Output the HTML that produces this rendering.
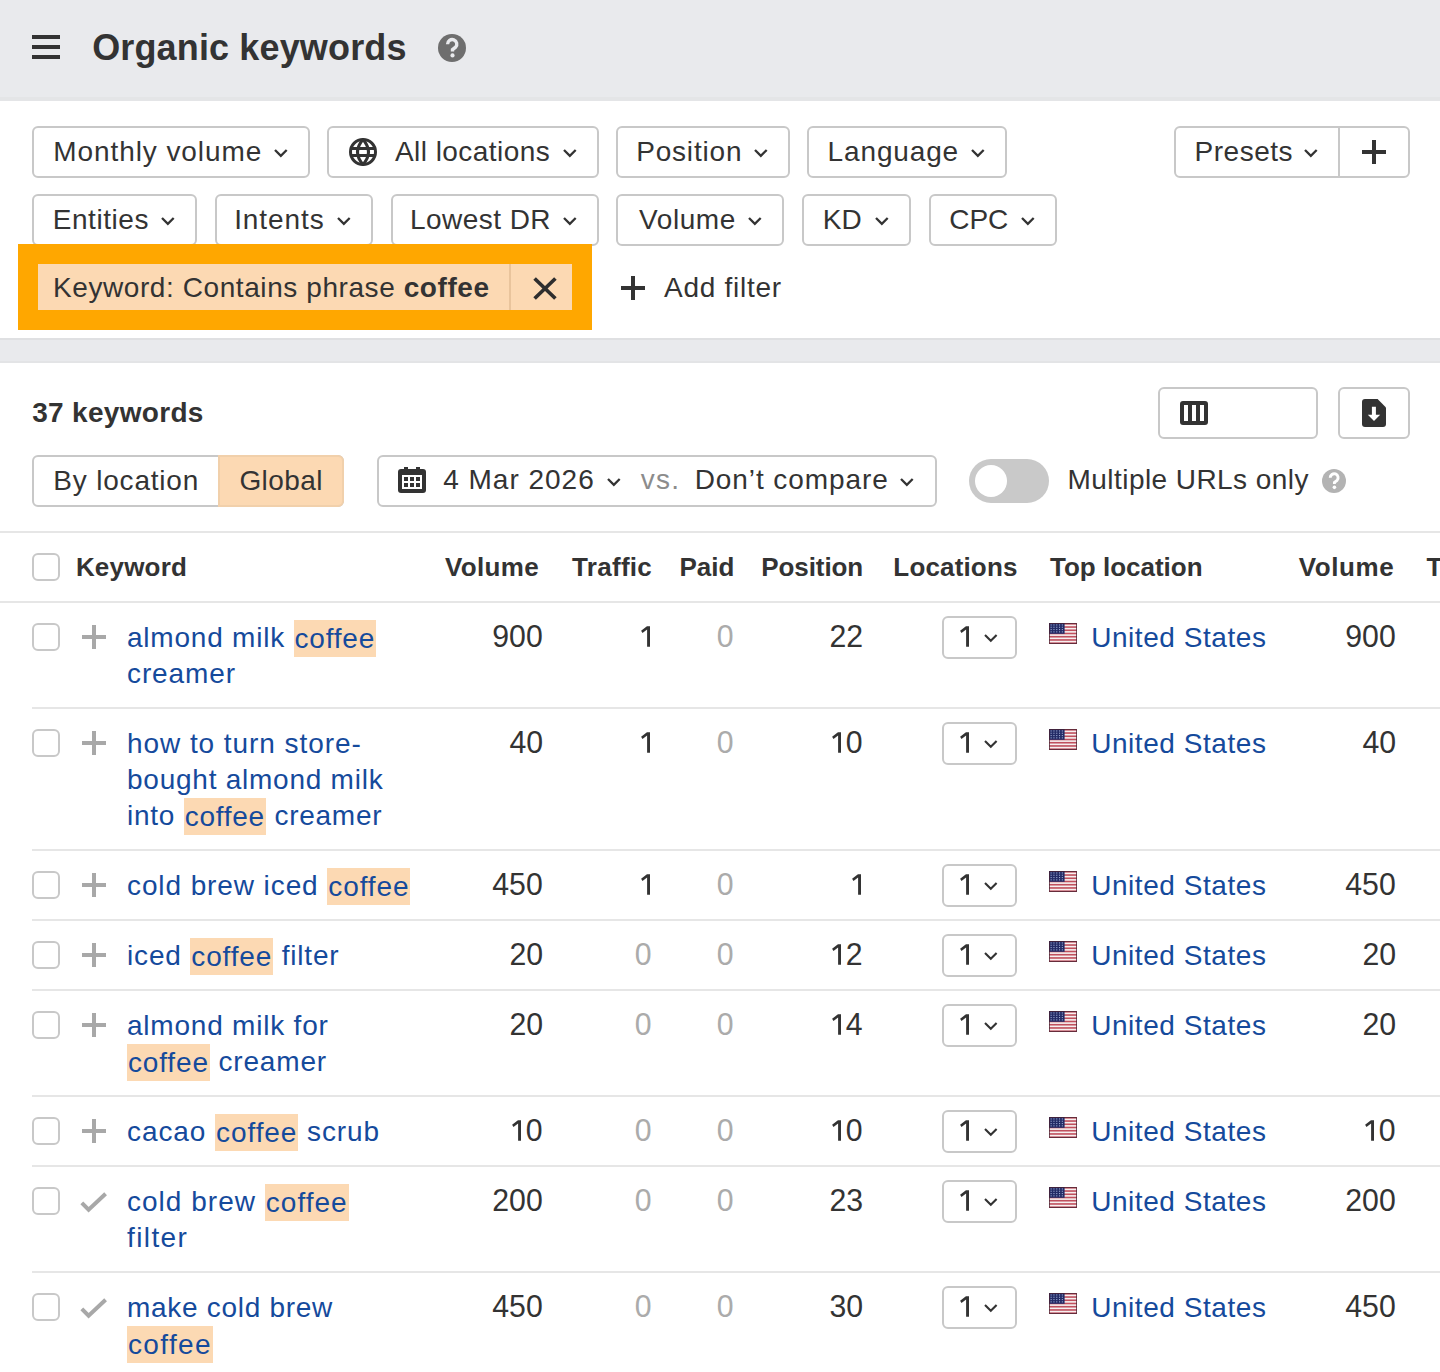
<!DOCTYPE html>
<html><head><meta charset="utf-8"><title>Organic keywords</title>
<style>
html,body{margin:0;padding:0;}
body{width:1440px;height:1372px;overflow:hidden;position:relative;background:#fff;font-family:"Liberation Sans",sans-serif;}
.t{position:absolute;white-space:nowrap;line-height:1;}
.b{position:absolute;}
.kw{font-size:28px;color:#154a9c;letter-spacing:0.55px;line-height:1;}
.hl{background:#fcd9b3;padding:2.5px 1px 4px 1px;}
</style></head><body>
<div class="b" style="left:0px;top:0px;width:1440px;height:97px;background:#e9eaed"></div>
<div class="b" style="left:0px;top:97px;width:1440px;height:4px;background:#e4e5e7"></div>
<div class="b" style="left:32px;top:35px;width:28px;height:4px;background:#333333"></div>
<div class="b" style="left:32px;top:45px;width:28px;height:4px;background:#333333"></div>
<div class="b" style="left:32px;top:55px;width:28px;height:4px;background:#333333"></div>
<span class="t" style="left:92.15px;top:30.33px;font-size:36px;font-weight:700;color:#333333;letter-spacing:0.147px;">Organic keywords</span>
<svg class="b" style="left:438px;top:34px" width="28" height="28" viewBox="0 0 28 28"><circle cx="14" cy="14" r="14" fill="#6e6e6e"/><path d="M9.6 10.2A4.6 4.6 0 1 1 17.6 13.2L14.5 15.6V17.6" fill="none" stroke="#e9eaed" stroke-width="3.4"/><circle cx="14.5" cy="21.4" r="2.1" fill="#e9eaed"/></svg>
<div class="b" style="left:32px;top:126px;width:278px;height:52px;border:2px solid #c8c8c8;border-radius:6px;box-sizing:border-box;background:#fff"></div>
<span class="t" style="left:53.18px;top:138.30px;font-size:28px;color:#333333;letter-spacing:0.929px;">Monthly volume</span>
<svg class="b" style="left:272.20px;top:146.60px" width="17.70" height="11.90" viewBox="-3 -3 17.70 11.90"><polyline points="0,0 5.85,5.90 11.70,0" fill="none" stroke="#333333" stroke-width="2.3" stroke-linecap="butt" stroke-linejoin="miter"/></svg>
<div class="b" style="left:327px;top:126px;width:272px;height:52px;border:2px solid #c8c8c8;border-radius:6px;box-sizing:border-box;background:#fff"></div>
<span class="t" style="left:395.00px;top:138.30px;font-size:28px;color:#333333;letter-spacing:0.442px;">All locations</span>
<svg class="b" style="left:561.20px;top:146.60px" width="17.70" height="11.90" viewBox="-3 -3 17.70 11.90"><polyline points="0,0 5.85,5.90 11.70,0" fill="none" stroke="#333333" stroke-width="2.3" stroke-linecap="butt" stroke-linejoin="miter"/></svg>
<svg class="b" style="left:349px;top:138px" width="28" height="28" viewBox="0 0 28 28"><g fill="none" stroke="#333" stroke-width="3"><circle cx="14" cy="14" r="12.5"/><path d="M14 1.5Q25 14 14 26.5Q3 14 14 1.5Z"/><path d="M2 10.5H26M2 17.5H26"/></g></svg>
<div class="b" style="left:616px;top:126px;width:174px;height:52px;border:2px solid #c8c8c8;border-radius:6px;box-sizing:border-box;background:#fff"></div>
<span class="t" style="left:636.14px;top:138.30px;font-size:28px;color:#333333;letter-spacing:0.829px;">Position</span>
<svg class="b" style="left:752.20px;top:146.60px" width="17.70" height="11.90" viewBox="-3 -3 17.70 11.90"><polyline points="0,0 5.85,5.90 11.70,0" fill="none" stroke="#333333" stroke-width="2.3" stroke-linecap="butt" stroke-linejoin="miter"/></svg>
<div class="b" style="left:807px;top:126px;width:200px;height:52px;border:2px solid #c8c8c8;border-radius:6px;box-sizing:border-box;background:#fff"></div>
<span class="t" style="left:827.60px;top:138.30px;font-size:28px;color:#333333;letter-spacing:0.857px;">Language</span>
<svg class="b" style="left:969.20px;top:146.60px" width="17.70" height="11.90" viewBox="-3 -3 17.70 11.90"><polyline points="0,0 5.85,5.90 11.70,0" fill="none" stroke="#333333" stroke-width="2.3" stroke-linecap="butt" stroke-linejoin="miter"/></svg>
<div class="b" style="left:1174px;top:126px;width:236px;height:52px;border:2px solid #c8c8c8;border-radius:6px;box-sizing:border-box;background:#fff"></div>
<div class="b" style="left:1338px;top:128px;width:2px;height:48px;background:#c8c8c8"></div>
<span class="t" style="left:1194.52px;top:138.30px;font-size:28px;color:#333333;letter-spacing:0.520px;">Presets</span>
<svg class="b" style="left:1301.50px;top:146.60px" width="17.70" height="11.90" viewBox="-3 -3 17.70 11.90"><polyline points="0,0 5.85,5.90 11.70,0" fill="none" stroke="#333333" stroke-width="2.3" stroke-linecap="butt" stroke-linejoin="miter"/></svg>
<svg class="b" style="left:1362px;top:140px" width="24" height="24" viewBox="0 0 24 24"><path d="M12.0 0V24M0 12.0H24" stroke="#333333" stroke-width="4"/></svg>
<div class="b" style="left:32px;top:194px;width:165px;height:52px;border:2px solid #c8c8c8;border-radius:6px;box-sizing:border-box;background:#fff"></div>
<span class="t" style="left:52.68px;top:206.30px;font-size:28px;color:#333333;letter-spacing:0.560px;">Entities</span>
<svg class="b" style="left:159.20px;top:214.60px" width="17.70" height="11.90" viewBox="-3 -3 17.70 11.90"><polyline points="0,0 5.85,5.90 11.70,0" fill="none" stroke="#333333" stroke-width="2.3" stroke-linecap="butt" stroke-linejoin="miter"/></svg>
<div class="b" style="left:215px;top:194px;width:158px;height:52px;border:2px solid #c8c8c8;border-radius:6px;box-sizing:border-box;background:#fff"></div>
<span class="t" style="left:234.14px;top:206.30px;font-size:28px;color:#333333;letter-spacing:0.943px;">Intents</span>
<svg class="b" style="left:335.20px;top:214.60px" width="17.70" height="11.90" viewBox="-3 -3 17.70 11.90"><polyline points="0,0 5.85,5.90 11.70,0" fill="none" stroke="#333333" stroke-width="2.3" stroke-linecap="butt" stroke-linejoin="miter"/></svg>
<div class="b" style="left:390.8px;top:194px;width:208.2px;height:52px;border:2px solid #c8c8c8;border-radius:6px;box-sizing:border-box;background:#fff"></div>
<span class="t" style="left:410.10px;top:206.30px;font-size:28px;color:#333333;letter-spacing:0.438px;">Lowest DR</span>
<svg class="b" style="left:561.20px;top:214.60px" width="17.70" height="11.90" viewBox="-3 -3 17.70 11.90"><polyline points="0,0 5.85,5.90 11.70,0" fill="none" stroke="#333333" stroke-width="2.3" stroke-linecap="butt" stroke-linejoin="miter"/></svg>
<div class="b" style="left:616px;top:194px;width:168px;height:52px;border:2px solid #c8c8c8;border-radius:6px;box-sizing:border-box;background:#fff"></div>
<span class="t" style="left:639.08px;top:206.30px;font-size:28px;color:#333333;letter-spacing:0.560px;">Volume</span>
<svg class="b" style="left:746.20px;top:214.60px" width="17.70" height="11.90" viewBox="-3 -3 17.70 11.90"><polyline points="0,0 5.85,5.90 11.70,0" fill="none" stroke="#333333" stroke-width="2.3" stroke-linecap="butt" stroke-linejoin="miter"/></svg>
<div class="b" style="left:802px;top:194px;width:109px;height:52px;border:2px solid #c8c8c8;border-radius:6px;box-sizing:border-box;background:#fff"></div>
<span class="t" style="left:822.80px;top:206.30px;font-size:28px;color:#333333;letter-spacing:0.000px;">KD</span>
<svg class="b" style="left:873.20px;top:214.60px" width="17.70" height="11.90" viewBox="-3 -3 17.70 11.90"><polyline points="0,0 5.85,5.90 11.70,0" fill="none" stroke="#333333" stroke-width="2.3" stroke-linecap="butt" stroke-linejoin="miter"/></svg>
<div class="b" style="left:929px;top:194px;width:128px;height:52px;border:2px solid #c8c8c8;border-radius:6px;box-sizing:border-box;background:#fff"></div>
<span class="t" style="left:949.36px;top:206.30px;font-size:28px;color:#333333;letter-spacing:-0.130px;">CPC</span>
<svg class="b" style="left:1019.20px;top:214.60px" width="17.70" height="11.90" viewBox="-3 -3 17.70 11.90"><polyline points="0,0 5.85,5.90 11.70,0" fill="none" stroke="#333333" stroke-width="2.3" stroke-linecap="butt" stroke-linejoin="miter"/></svg>
<div class="b" style="left:18px;top:244px;width:574px;height:86px;background:#ffa700"></div>
<div class="b" style="left:38px;top:264px;width:534px;height:46px;background:#fcd9b3"></div>
<div class="b" style="left:509px;top:264px;width:2px;height:46px;background:#e9c49c"></div>
<span class="t" style="left:53px;top:274.3px;font-size:28px;color:#333;letter-spacing:0.58px">Keyword: Contains phrase <b>coffee</b></span>
<svg class="b" style="left:533px;top:276.5px" width="24" height="23" viewBox="0 0 24 23"><path d="M1.6 1.5L22.4 21.5M22.4 1.5L1.6 21.5" stroke="#2e2e2e" stroke-width="3.7"/></svg>
<svg class="b" style="left:621px;top:276px" width="24" height="24" viewBox="0 0 24 24"><path d="M12.0 0V24M0 12.0H24" stroke="#333333" stroke-width="4"/></svg>
<span class="t" style="left:664.00px;top:274.30px;font-size:28px;color:#333333;letter-spacing:0.742px;">Add filter</span>
<div class="b" style="left:0px;top:338px;width:1440px;height:25px;background:#e9eaed;border-top:2px solid #dfe0e2;border-bottom:2px solid #e3e4e6;box-sizing:border-box"></div>
<span class="t" style="left:32.20px;top:399.30px;font-size:28px;font-weight:700;color:#333333;letter-spacing:0.310px;">37 keywords</span>
<div class="b" style="left:1158px;top:387px;width:160px;height:52px;border:2px solid #c8c8c8;border-radius:6px;box-sizing:border-box"></div>
<svg class="b" style="left:1180px;top:401px" width="28" height="24" viewBox="0 0 28 24"><rect x="0" y="0" width="28" height="24" rx="3" fill="#333"/><rect x="4" y="4" width="4" height="16" fill="#fff"/><rect x="12" y="4" width="4" height="16" fill="#fff"/><rect x="20" y="4" width="4" height="16" fill="#fff"/></svg>
<div class="b" style="left:1338px;top:387px;width:72px;height:52px;border:2px solid #c8c8c8;border-radius:6px;box-sizing:border-box"></div>
<svg class="b" style="left:1362px;top:399px" width="24" height="28" viewBox="0 0 24 28"><path d="M3 0H15.6L24 8.4V25A3 3 0 0 1 21 28H3A3 3 0 0 1 0 25V3A3 3 0 0 1 3 0Z" fill="#333"/><path d="M9.9 7.7H13.9V15.7H18.2L12 22L5.8 15.7H9.9Z" fill="#fff"/></svg>
<div class="b" style="left:32px;top:455px;width:312px;height:52px;border:2px solid #c8c8c8;border-radius:6px;box-sizing:border-box;background:#fff"></div>
<div class="b" style="left:218px;top:455px;width:126px;height:52px;background:#fcd9b3;border:2px solid #f1d0ab;border-left-color:#f1d0ab;border-radius:0 6px 6px 0;box-sizing:border-box"></div>
<span class="t" style="left:53.35px;top:467.30px;font-size:28px;color:#333333;letter-spacing:0.800px;">By location</span>
<span class="t" style="left:239.40px;top:467.30px;font-size:28px;color:#333333;letter-spacing:0.440px;">Global</span>
<div class="b" style="left:377px;top:455px;width:560px;height:52px;border:2px solid #c8c8c8;border-radius:6px;box-sizing:border-box"></div>
<svg class="b" style="left:398px;top:467px" width="28" height="26" viewBox="0 0 28 26"><rect x="6" y="0" width="4" height="4" fill="#333"/><rect x="18" y="0" width="4" height="4" fill="#333"/><rect x="0" y="2" width="28" height="24" rx="3" fill="#333"/><rect x="4" y="8" width="20" height="14" fill="#fff"/><rect x="6" y="10" width="4" height="4" fill="#333"/><rect x="12" y="10" width="4" height="4" fill="#333"/><rect x="18" y="10" width="4" height="4" fill="#333"/><rect x="6" y="16" width="4" height="4" fill="#333"/><rect x="12" y="16" width="4" height="4" fill="#333"/><rect x="18" y="16" width="4" height="4" fill="#333"/></svg>
<span class="t" style="left:443.20px;top:466.30px;font-size:28px;color:#333333;letter-spacing:0.989px;">4 Mar 2026</span>
<svg class="b" style="left:604.60px;top:475.80px" width="17.70" height="11.90" viewBox="-3 -3 17.70 11.90"><polyline points="0,0 5.85,5.90 11.70,0" fill="none" stroke="#333333" stroke-width="2.3" stroke-linecap="butt" stroke-linejoin="miter"/></svg>
<span class="t" style="left:640.66px;top:466.30px;font-size:28px;color:#8c8c8c;letter-spacing:1.330px;">vs.</span>
<span class="t" style="left:694.64px;top:466.30px;font-size:28px;color:#333333;letter-spacing:0.917px;">Don’t compare</span>
<svg class="b" style="left:898.30px;top:475.80px" width="17.70" height="11.90" viewBox="-3 -3 17.70 11.90"><polyline points="0,0 5.85,5.90 11.70,0" fill="none" stroke="#333333" stroke-width="2.3" stroke-linecap="butt" stroke-linejoin="miter"/></svg>
<div class="b" style="left:969px;top:459px;width:80px;height:44px;background:#c9c9c9;border-radius:22px"></div>
<div class="b" style="left:975px;top:465px;width:32px;height:32px;background:#fff;border-radius:50%"></div>
<span class="t" style="left:1067.60px;top:466.30px;font-size:28px;color:#333333;letter-spacing:0.435px;">Multiple URLs only</span>
<svg class="b" style="left:1322px;top:469px" width="24" height="24" viewBox="0 0 28 28"><circle cx="14" cy="14" r="14" fill="#b3b3b3"/><path d="M9.6 10.2A4.6 4.6 0 1 1 17.6 13.2L14.5 15.6V17.6" fill="none" stroke="#fff" stroke-width="3.4"/><circle cx="14.5" cy="21.4" r="2.1" fill="#fff"/></svg>
<div class="b" style="left:0px;top:531px;width:1440px;height:2px;background:#e6e6e6"></div>
<div class="b" style="left:0px;top:601px;width:1440px;height:2px;background:#e6e6e6"></div>
<div class="b" style="left:32px;top:553px;width:28px;height:28px;border:2px solid #c8c8c8;border-radius:6px;box-sizing:border-box"></div>
<span class="t" style="left:75.90px;top:553.99px;font-size:26px;font-weight:700;color:#333333;letter-spacing:0.200px;">Keyword</span>
<span class="t" style="left:445.12px;top:553.99px;font-size:26px;font-weight:700;color:#333333;letter-spacing:0.328px;">Volume</span>
<span class="t" style="left:572.04px;top:553.99px;font-size:26px;font-weight:700;color:#333333;letter-spacing:0.293px;">Traffic</span>
<span class="t" style="left:679.40px;top:553.99px;font-size:26px;font-weight:700;color:#333333;letter-spacing:0.067px;">Paid</span>
<span class="t" style="left:761.36px;top:553.99px;font-size:26px;font-weight:700;color:#333333;letter-spacing:-0.109px;">Position</span>
<span class="t" style="left:893.36px;top:553.99px;font-size:26px;font-weight:700;color:#333333;letter-spacing:0.155px;">Locations</span>
<span class="t" style="left:1050.00px;top:553.99px;font-size:26px;font-weight:700;color:#333333;letter-spacing:-0.002px;">Top location</span>
<span class="t" style="left:1298.66px;top:553.99px;font-size:26px;font-weight:700;color:#333333;letter-spacing:0.612px;">Volume</span>
<span class="t" style="left:1426.50px;top:553.99px;font-size:26px;font-weight:700;color:#333333;letter-spacing:0.000px;">T</span>
<div class="b" style="left:32px;top:623px;width:28px;height:28px;border:2px solid #c8c8c8;border-radius:6px;box-sizing:border-box"></div>
<svg class="b" style="left:82px;top:625px" width="24" height="24" viewBox="0 0 24 24"><path d="M12.0 0V24M0 12.0H24" stroke="#a8a8a8" stroke-width="4"/></svg>
<span class="t kw" style="left:127px;top:624.30px;letter-spacing:0.785px">almond milk <span class="hl">coffee</span></span>
<span class="t kw" style="left:127px;top:660.30px;letter-spacing:0.883px">creamer</span>
<span class="t" style="right:897.77px;top:624.30px;font-size:28px;color:#333333;transform:scale(1.08,1.09);transform-origin:100% 23.7px">900</span>
<svg class="b" style="left:641.20px;top:626.10px" width="9" height="21" viewBox="0 0 9 21"><path d="M6.1 0.2H9V20.7H6.1V3.6L1.5 6.9L0.1 4.8L5.6 0.6Z" fill="#333333"/></svg>
<span class="t" style="right:706.92px;top:624.30px;font-size:28px;color:#ababab;transform:scale(1.08,1.09);transform-origin:100% 23.7px">0</span>
<span class="t" style="right:577.34px;top:624.30px;font-size:28px;color:#333333;transform:scale(1.08,1.09);transform-origin:100% 23.7px">22</span>
<div class="b" style="left:942px;top:616px;width:75px;height:43px;border:2px solid #c8c8c8;border-radius:6px;box-sizing:border-box"></div>
<svg class="b" style="left:959.60px;top:626.30px" width="9" height="21" viewBox="0 0 9 21"><path d="M6.1 0.2H9V20.7H6.1V3.6L1.5 6.9L0.1 4.8L5.6 0.6Z" fill="#333333"/></svg>
<svg class="b" style="left:982.30px;top:631.60px" width="17.60" height="11.80" viewBox="-3 -3 17.60 11.80"><polyline points="0,0 5.80,5.80 11.60,0" fill="none" stroke="#333333" stroke-width="2.1" stroke-linecap="butt" stroke-linejoin="miter"/></svg>
<svg class="b" style="left:1049px;top:623px" width="28" height="21" viewBox="0 0 28 21"><rect width="28" height="21" fill="#f6f0f0"/><rect x="0" y="0.000" width="28" height="1.615" fill="#c0505e"/><rect x="0" y="3.231" width="28" height="1.615" fill="#c0505e"/><rect x="0" y="6.462" width="28" height="1.615" fill="#c0505e"/><rect x="0" y="9.692" width="28" height="1.615" fill="#c0505e"/><rect x="0" y="12.923" width="28" height="1.615" fill="#c0505e"/><rect x="0" y="16.154" width="28" height="1.615" fill="#c0505e"/><rect x="0" y="19.385" width="28" height="1.615" fill="#c0505e"/><rect x="0" y="0" width="15.6" height="10.8" fill="#232b66"/><rect x="1.60" y="1.40" width="1.1" height="1.1" fill="#9aa6d0"/><rect x="1.60" y="3.70" width="1.1" height="1.1" fill="#9aa6d0"/><rect x="1.60" y="6.00" width="1.1" height="1.1" fill="#9aa6d0"/><rect x="1.60" y="8.30" width="1.1" height="1.1" fill="#9aa6d0"/><rect x="4.40" y="1.40" width="1.1" height="1.1" fill="#9aa6d0"/><rect x="4.40" y="3.70" width="1.1" height="1.1" fill="#9aa6d0"/><rect x="4.40" y="6.00" width="1.1" height="1.1" fill="#9aa6d0"/><rect x="4.40" y="8.30" width="1.1" height="1.1" fill="#9aa6d0"/><rect x="7.20" y="1.40" width="1.1" height="1.1" fill="#9aa6d0"/><rect x="7.20" y="3.70" width="1.1" height="1.1" fill="#9aa6d0"/><rect x="7.20" y="6.00" width="1.1" height="1.1" fill="#9aa6d0"/><rect x="7.20" y="8.30" width="1.1" height="1.1" fill="#9aa6d0"/><rect x="10.00" y="1.40" width="1.1" height="1.1" fill="#9aa6d0"/><rect x="10.00" y="3.70" width="1.1" height="1.1" fill="#9aa6d0"/><rect x="10.00" y="6.00" width="1.1" height="1.1" fill="#9aa6d0"/><rect x="10.00" y="8.30" width="1.1" height="1.1" fill="#9aa6d0"/><rect x="12.80" y="1.40" width="1.1" height="1.1" fill="#9aa6d0"/><rect x="12.80" y="3.70" width="1.1" height="1.1" fill="#9aa6d0"/><rect x="12.80" y="6.00" width="1.1" height="1.1" fill="#9aa6d0"/><rect x="12.80" y="8.30" width="1.1" height="1.1" fill="#9aa6d0"/><rect x="0.5" y="0.5" width="27" height="20" fill="none" stroke="#4a2030" stroke-opacity="0.75" stroke-width="1"/></svg>
<span class="t" style="left:1091.18px;top:624.30px;font-size:28px;color:#154a9c;letter-spacing:0.552px;">United States</span>
<span class="t" style="right:44.77px;top:624.30px;font-size:28px;color:#333333;transform:scale(1.08,1.09);transform-origin:100% 23.7px">900</span>
<div class="b" style="left:32px;top:707px;width:1408px;height:2px;background:#e6e6e6"></div>
<div class="b" style="left:32px;top:729px;width:28px;height:28px;border:2px solid #c8c8c8;border-radius:6px;box-sizing:border-box"></div>
<svg class="b" style="left:82px;top:731px" width="24" height="24" viewBox="0 0 24 24"><path d="M12.0 0V24M0 12.0H24" stroke="#a8a8a8" stroke-width="4"/></svg>
<span class="t kw" style="left:127px;top:730.30px;letter-spacing:0.938px">how to turn store-</span>
<span class="t kw" style="left:127px;top:766.30px;letter-spacing:0.756px">bought almond milk</span>
<span class="t kw" style="left:127px;top:802.30px;letter-spacing:0.744px">into <span class="hl">coffee</span> creamer</span>
<span class="t" style="right:897.34px;top:730.30px;font-size:28px;color:#333333;transform:scale(1.08,1.09);transform-origin:100% 23.7px">40</span>
<svg class="b" style="left:641.20px;top:732.10px" width="9" height="21" viewBox="0 0 9 21"><path d="M6.1 0.2H9V20.7H6.1V3.6L1.5 6.9L0.1 4.8L5.6 0.6Z" fill="#333333"/></svg>
<span class="t" style="right:706.92px;top:730.30px;font-size:28px;color:#ababab;transform:scale(1.08,1.09);transform-origin:100% 23.7px">0</span>
<span class="t" style="right:577.92px;top:730.30px;font-size:28px;color:#333333;transform:scale(1.08,1.09);transform-origin:100% 23.7px">0</span>
<svg class="b" style="left:832.32px;top:732.10px" width="9" height="21" viewBox="0 0 9 21"><path d="M6.1 0.2H9V20.7H6.1V3.6L1.5 6.9L0.1 4.8L5.6 0.6Z" fill="#333333"/></svg>
<div class="b" style="left:942px;top:722px;width:75px;height:43px;border:2px solid #c8c8c8;border-radius:6px;box-sizing:border-box"></div>
<svg class="b" style="left:959.60px;top:732.30px" width="9" height="21" viewBox="0 0 9 21"><path d="M6.1 0.2H9V20.7H6.1V3.6L1.5 6.9L0.1 4.8L5.6 0.6Z" fill="#333333"/></svg>
<svg class="b" style="left:982.30px;top:737.60px" width="17.60" height="11.80" viewBox="-3 -3 17.60 11.80"><polyline points="0,0 5.80,5.80 11.60,0" fill="none" stroke="#333333" stroke-width="2.1" stroke-linecap="butt" stroke-linejoin="miter"/></svg>
<svg class="b" style="left:1049px;top:729px" width="28" height="21" viewBox="0 0 28 21"><rect width="28" height="21" fill="#f6f0f0"/><rect x="0" y="0.000" width="28" height="1.615" fill="#c0505e"/><rect x="0" y="3.231" width="28" height="1.615" fill="#c0505e"/><rect x="0" y="6.462" width="28" height="1.615" fill="#c0505e"/><rect x="0" y="9.692" width="28" height="1.615" fill="#c0505e"/><rect x="0" y="12.923" width="28" height="1.615" fill="#c0505e"/><rect x="0" y="16.154" width="28" height="1.615" fill="#c0505e"/><rect x="0" y="19.385" width="28" height="1.615" fill="#c0505e"/><rect x="0" y="0" width="15.6" height="10.8" fill="#232b66"/><rect x="1.60" y="1.40" width="1.1" height="1.1" fill="#9aa6d0"/><rect x="1.60" y="3.70" width="1.1" height="1.1" fill="#9aa6d0"/><rect x="1.60" y="6.00" width="1.1" height="1.1" fill="#9aa6d0"/><rect x="1.60" y="8.30" width="1.1" height="1.1" fill="#9aa6d0"/><rect x="4.40" y="1.40" width="1.1" height="1.1" fill="#9aa6d0"/><rect x="4.40" y="3.70" width="1.1" height="1.1" fill="#9aa6d0"/><rect x="4.40" y="6.00" width="1.1" height="1.1" fill="#9aa6d0"/><rect x="4.40" y="8.30" width="1.1" height="1.1" fill="#9aa6d0"/><rect x="7.20" y="1.40" width="1.1" height="1.1" fill="#9aa6d0"/><rect x="7.20" y="3.70" width="1.1" height="1.1" fill="#9aa6d0"/><rect x="7.20" y="6.00" width="1.1" height="1.1" fill="#9aa6d0"/><rect x="7.20" y="8.30" width="1.1" height="1.1" fill="#9aa6d0"/><rect x="10.00" y="1.40" width="1.1" height="1.1" fill="#9aa6d0"/><rect x="10.00" y="3.70" width="1.1" height="1.1" fill="#9aa6d0"/><rect x="10.00" y="6.00" width="1.1" height="1.1" fill="#9aa6d0"/><rect x="10.00" y="8.30" width="1.1" height="1.1" fill="#9aa6d0"/><rect x="12.80" y="1.40" width="1.1" height="1.1" fill="#9aa6d0"/><rect x="12.80" y="3.70" width="1.1" height="1.1" fill="#9aa6d0"/><rect x="12.80" y="6.00" width="1.1" height="1.1" fill="#9aa6d0"/><rect x="12.80" y="8.30" width="1.1" height="1.1" fill="#9aa6d0"/><rect x="0.5" y="0.5" width="27" height="20" fill="none" stroke="#4a2030" stroke-opacity="0.75" stroke-width="1"/></svg>
<span class="t" style="left:1091.18px;top:730.30px;font-size:28px;color:#154a9c;letter-spacing:0.552px;">United States</span>
<span class="t" style="right:44.34px;top:730.30px;font-size:28px;color:#333333;transform:scale(1.08,1.09);transform-origin:100% 23.7px">40</span>
<div class="b" style="left:32px;top:849px;width:1408px;height:2px;background:#e6e6e6"></div>
<div class="b" style="left:32px;top:871px;width:28px;height:28px;border:2px solid #c8c8c8;border-radius:6px;box-sizing:border-box"></div>
<svg class="b" style="left:82px;top:873px" width="24" height="24" viewBox="0 0 24 24"><path d="M12.0 0V24M0 12.0H24" stroke="#a8a8a8" stroke-width="4"/></svg>
<span class="t kw" style="left:127px;top:872.30px;letter-spacing:0.900px">cold brew iced <span class="hl">coffee</span></span>
<span class="t" style="right:897.77px;top:872.30px;font-size:28px;color:#333333;transform:scale(1.08,1.09);transform-origin:100% 23.7px">450</span>
<svg class="b" style="left:641.20px;top:874.10px" width="9" height="21" viewBox="0 0 9 21"><path d="M6.1 0.2H9V20.7H6.1V3.6L1.5 6.9L0.1 4.8L5.6 0.6Z" fill="#333333"/></svg>
<span class="t" style="right:706.92px;top:872.30px;font-size:28px;color:#ababab;transform:scale(1.08,1.09);transform-origin:100% 23.7px">0</span>
<svg class="b" style="left:852.20px;top:874.10px" width="9" height="21" viewBox="0 0 9 21"><path d="M6.1 0.2H9V20.7H6.1V3.6L1.5 6.9L0.1 4.8L5.6 0.6Z" fill="#333333"/></svg>
<div class="b" style="left:942px;top:864px;width:75px;height:43px;border:2px solid #c8c8c8;border-radius:6px;box-sizing:border-box"></div>
<svg class="b" style="left:959.60px;top:874.30px" width="9" height="21" viewBox="0 0 9 21"><path d="M6.1 0.2H9V20.7H6.1V3.6L1.5 6.9L0.1 4.8L5.6 0.6Z" fill="#333333"/></svg>
<svg class="b" style="left:982.30px;top:879.60px" width="17.60" height="11.80" viewBox="-3 -3 17.60 11.80"><polyline points="0,0 5.80,5.80 11.60,0" fill="none" stroke="#333333" stroke-width="2.1" stroke-linecap="butt" stroke-linejoin="miter"/></svg>
<svg class="b" style="left:1049px;top:871px" width="28" height="21" viewBox="0 0 28 21"><rect width="28" height="21" fill="#f6f0f0"/><rect x="0" y="0.000" width="28" height="1.615" fill="#c0505e"/><rect x="0" y="3.231" width="28" height="1.615" fill="#c0505e"/><rect x="0" y="6.462" width="28" height="1.615" fill="#c0505e"/><rect x="0" y="9.692" width="28" height="1.615" fill="#c0505e"/><rect x="0" y="12.923" width="28" height="1.615" fill="#c0505e"/><rect x="0" y="16.154" width="28" height="1.615" fill="#c0505e"/><rect x="0" y="19.385" width="28" height="1.615" fill="#c0505e"/><rect x="0" y="0" width="15.6" height="10.8" fill="#232b66"/><rect x="1.60" y="1.40" width="1.1" height="1.1" fill="#9aa6d0"/><rect x="1.60" y="3.70" width="1.1" height="1.1" fill="#9aa6d0"/><rect x="1.60" y="6.00" width="1.1" height="1.1" fill="#9aa6d0"/><rect x="1.60" y="8.30" width="1.1" height="1.1" fill="#9aa6d0"/><rect x="4.40" y="1.40" width="1.1" height="1.1" fill="#9aa6d0"/><rect x="4.40" y="3.70" width="1.1" height="1.1" fill="#9aa6d0"/><rect x="4.40" y="6.00" width="1.1" height="1.1" fill="#9aa6d0"/><rect x="4.40" y="8.30" width="1.1" height="1.1" fill="#9aa6d0"/><rect x="7.20" y="1.40" width="1.1" height="1.1" fill="#9aa6d0"/><rect x="7.20" y="3.70" width="1.1" height="1.1" fill="#9aa6d0"/><rect x="7.20" y="6.00" width="1.1" height="1.1" fill="#9aa6d0"/><rect x="7.20" y="8.30" width="1.1" height="1.1" fill="#9aa6d0"/><rect x="10.00" y="1.40" width="1.1" height="1.1" fill="#9aa6d0"/><rect x="10.00" y="3.70" width="1.1" height="1.1" fill="#9aa6d0"/><rect x="10.00" y="6.00" width="1.1" height="1.1" fill="#9aa6d0"/><rect x="10.00" y="8.30" width="1.1" height="1.1" fill="#9aa6d0"/><rect x="12.80" y="1.40" width="1.1" height="1.1" fill="#9aa6d0"/><rect x="12.80" y="3.70" width="1.1" height="1.1" fill="#9aa6d0"/><rect x="12.80" y="6.00" width="1.1" height="1.1" fill="#9aa6d0"/><rect x="12.80" y="8.30" width="1.1" height="1.1" fill="#9aa6d0"/><rect x="0.5" y="0.5" width="27" height="20" fill="none" stroke="#4a2030" stroke-opacity="0.75" stroke-width="1"/></svg>
<span class="t" style="left:1091.18px;top:872.30px;font-size:28px;color:#154a9c;letter-spacing:0.552px;">United States</span>
<span class="t" style="right:44.77px;top:872.30px;font-size:28px;color:#333333;transform:scale(1.08,1.09);transform-origin:100% 23.7px">450</span>
<div class="b" style="left:32px;top:919px;width:1408px;height:2px;background:#e6e6e6"></div>
<div class="b" style="left:32px;top:941px;width:28px;height:28px;border:2px solid #c8c8c8;border-radius:6px;box-sizing:border-box"></div>
<svg class="b" style="left:82px;top:943px" width="24" height="24" viewBox="0 0 24 24"><path d="M12.0 0V24M0 12.0H24" stroke="#a8a8a8" stroke-width="4"/></svg>
<span class="t kw" style="left:127px;top:942.30px;letter-spacing:0.829px">iced <span class="hl">coffee</span> filter</span>
<span class="t" style="right:897.34px;top:942.30px;font-size:28px;color:#333333;transform:scale(1.08,1.09);transform-origin:100% 23.7px">20</span>
<span class="t" style="right:788.92px;top:942.30px;font-size:28px;color:#ababab;transform:scale(1.08,1.09);transform-origin:100% 23.7px">0</span>
<span class="t" style="right:706.92px;top:942.30px;font-size:28px;color:#ababab;transform:scale(1.08,1.09);transform-origin:100% 23.7px">0</span>
<span class="t" style="right:577.92px;top:942.30px;font-size:28px;color:#333333;transform:scale(1.08,1.09);transform-origin:100% 23.7px">2</span>
<svg class="b" style="left:832.32px;top:944.10px" width="9" height="21" viewBox="0 0 9 21"><path d="M6.1 0.2H9V20.7H6.1V3.6L1.5 6.9L0.1 4.8L5.6 0.6Z" fill="#333333"/></svg>
<div class="b" style="left:942px;top:934px;width:75px;height:43px;border:2px solid #c8c8c8;border-radius:6px;box-sizing:border-box"></div>
<svg class="b" style="left:959.60px;top:944.30px" width="9" height="21" viewBox="0 0 9 21"><path d="M6.1 0.2H9V20.7H6.1V3.6L1.5 6.9L0.1 4.8L5.6 0.6Z" fill="#333333"/></svg>
<svg class="b" style="left:982.30px;top:949.60px" width="17.60" height="11.80" viewBox="-3 -3 17.60 11.80"><polyline points="0,0 5.80,5.80 11.60,0" fill="none" stroke="#333333" stroke-width="2.1" stroke-linecap="butt" stroke-linejoin="miter"/></svg>
<svg class="b" style="left:1049px;top:941px" width="28" height="21" viewBox="0 0 28 21"><rect width="28" height="21" fill="#f6f0f0"/><rect x="0" y="0.000" width="28" height="1.615" fill="#c0505e"/><rect x="0" y="3.231" width="28" height="1.615" fill="#c0505e"/><rect x="0" y="6.462" width="28" height="1.615" fill="#c0505e"/><rect x="0" y="9.692" width="28" height="1.615" fill="#c0505e"/><rect x="0" y="12.923" width="28" height="1.615" fill="#c0505e"/><rect x="0" y="16.154" width="28" height="1.615" fill="#c0505e"/><rect x="0" y="19.385" width="28" height="1.615" fill="#c0505e"/><rect x="0" y="0" width="15.6" height="10.8" fill="#232b66"/><rect x="1.60" y="1.40" width="1.1" height="1.1" fill="#9aa6d0"/><rect x="1.60" y="3.70" width="1.1" height="1.1" fill="#9aa6d0"/><rect x="1.60" y="6.00" width="1.1" height="1.1" fill="#9aa6d0"/><rect x="1.60" y="8.30" width="1.1" height="1.1" fill="#9aa6d0"/><rect x="4.40" y="1.40" width="1.1" height="1.1" fill="#9aa6d0"/><rect x="4.40" y="3.70" width="1.1" height="1.1" fill="#9aa6d0"/><rect x="4.40" y="6.00" width="1.1" height="1.1" fill="#9aa6d0"/><rect x="4.40" y="8.30" width="1.1" height="1.1" fill="#9aa6d0"/><rect x="7.20" y="1.40" width="1.1" height="1.1" fill="#9aa6d0"/><rect x="7.20" y="3.70" width="1.1" height="1.1" fill="#9aa6d0"/><rect x="7.20" y="6.00" width="1.1" height="1.1" fill="#9aa6d0"/><rect x="7.20" y="8.30" width="1.1" height="1.1" fill="#9aa6d0"/><rect x="10.00" y="1.40" width="1.1" height="1.1" fill="#9aa6d0"/><rect x="10.00" y="3.70" width="1.1" height="1.1" fill="#9aa6d0"/><rect x="10.00" y="6.00" width="1.1" height="1.1" fill="#9aa6d0"/><rect x="10.00" y="8.30" width="1.1" height="1.1" fill="#9aa6d0"/><rect x="12.80" y="1.40" width="1.1" height="1.1" fill="#9aa6d0"/><rect x="12.80" y="3.70" width="1.1" height="1.1" fill="#9aa6d0"/><rect x="12.80" y="6.00" width="1.1" height="1.1" fill="#9aa6d0"/><rect x="12.80" y="8.30" width="1.1" height="1.1" fill="#9aa6d0"/><rect x="0.5" y="0.5" width="27" height="20" fill="none" stroke="#4a2030" stroke-opacity="0.75" stroke-width="1"/></svg>
<span class="t" style="left:1091.18px;top:942.30px;font-size:28px;color:#154a9c;letter-spacing:0.552px;">United States</span>
<span class="t" style="right:44.34px;top:942.30px;font-size:28px;color:#333333;transform:scale(1.08,1.09);transform-origin:100% 23.7px">20</span>
<div class="b" style="left:32px;top:989px;width:1408px;height:2px;background:#e6e6e6"></div>
<div class="b" style="left:32px;top:1011px;width:28px;height:28px;border:2px solid #c8c8c8;border-radius:6px;box-sizing:border-box"></div>
<svg class="b" style="left:82px;top:1013px" width="24" height="24" viewBox="0 0 24 24"><path d="M12.0 0V24M0 12.0H24" stroke="#a8a8a8" stroke-width="4"/></svg>
<span class="t kw" style="left:127px;top:1012.30px;letter-spacing:0.786px">almond milk for</span>
<span class="t kw" style="left:127px;top:1048.30px;letter-spacing:0.842px"><span class="hl">coffee</span> creamer</span>
<span class="t" style="right:897.34px;top:1012.30px;font-size:28px;color:#333333;transform:scale(1.08,1.09);transform-origin:100% 23.7px">20</span>
<span class="t" style="right:788.92px;top:1012.30px;font-size:28px;color:#ababab;transform:scale(1.08,1.09);transform-origin:100% 23.7px">0</span>
<span class="t" style="right:706.92px;top:1012.30px;font-size:28px;color:#ababab;transform:scale(1.08,1.09);transform-origin:100% 23.7px">0</span>
<span class="t" style="right:577.92px;top:1012.30px;font-size:28px;color:#333333;transform:scale(1.08,1.09);transform-origin:100% 23.7px">4</span>
<svg class="b" style="left:832.32px;top:1014.10px" width="9" height="21" viewBox="0 0 9 21"><path d="M6.1 0.2H9V20.7H6.1V3.6L1.5 6.9L0.1 4.8L5.6 0.6Z" fill="#333333"/></svg>
<div class="b" style="left:942px;top:1004px;width:75px;height:43px;border:2px solid #c8c8c8;border-radius:6px;box-sizing:border-box"></div>
<svg class="b" style="left:959.60px;top:1014.30px" width="9" height="21" viewBox="0 0 9 21"><path d="M6.1 0.2H9V20.7H6.1V3.6L1.5 6.9L0.1 4.8L5.6 0.6Z" fill="#333333"/></svg>
<svg class="b" style="left:982.30px;top:1019.60px" width="17.60" height="11.80" viewBox="-3 -3 17.60 11.80"><polyline points="0,0 5.80,5.80 11.60,0" fill="none" stroke="#333333" stroke-width="2.1" stroke-linecap="butt" stroke-linejoin="miter"/></svg>
<svg class="b" style="left:1049px;top:1011px" width="28" height="21" viewBox="0 0 28 21"><rect width="28" height="21" fill="#f6f0f0"/><rect x="0" y="0.000" width="28" height="1.615" fill="#c0505e"/><rect x="0" y="3.231" width="28" height="1.615" fill="#c0505e"/><rect x="0" y="6.462" width="28" height="1.615" fill="#c0505e"/><rect x="0" y="9.692" width="28" height="1.615" fill="#c0505e"/><rect x="0" y="12.923" width="28" height="1.615" fill="#c0505e"/><rect x="0" y="16.154" width="28" height="1.615" fill="#c0505e"/><rect x="0" y="19.385" width="28" height="1.615" fill="#c0505e"/><rect x="0" y="0" width="15.6" height="10.8" fill="#232b66"/><rect x="1.60" y="1.40" width="1.1" height="1.1" fill="#9aa6d0"/><rect x="1.60" y="3.70" width="1.1" height="1.1" fill="#9aa6d0"/><rect x="1.60" y="6.00" width="1.1" height="1.1" fill="#9aa6d0"/><rect x="1.60" y="8.30" width="1.1" height="1.1" fill="#9aa6d0"/><rect x="4.40" y="1.40" width="1.1" height="1.1" fill="#9aa6d0"/><rect x="4.40" y="3.70" width="1.1" height="1.1" fill="#9aa6d0"/><rect x="4.40" y="6.00" width="1.1" height="1.1" fill="#9aa6d0"/><rect x="4.40" y="8.30" width="1.1" height="1.1" fill="#9aa6d0"/><rect x="7.20" y="1.40" width="1.1" height="1.1" fill="#9aa6d0"/><rect x="7.20" y="3.70" width="1.1" height="1.1" fill="#9aa6d0"/><rect x="7.20" y="6.00" width="1.1" height="1.1" fill="#9aa6d0"/><rect x="7.20" y="8.30" width="1.1" height="1.1" fill="#9aa6d0"/><rect x="10.00" y="1.40" width="1.1" height="1.1" fill="#9aa6d0"/><rect x="10.00" y="3.70" width="1.1" height="1.1" fill="#9aa6d0"/><rect x="10.00" y="6.00" width="1.1" height="1.1" fill="#9aa6d0"/><rect x="10.00" y="8.30" width="1.1" height="1.1" fill="#9aa6d0"/><rect x="12.80" y="1.40" width="1.1" height="1.1" fill="#9aa6d0"/><rect x="12.80" y="3.70" width="1.1" height="1.1" fill="#9aa6d0"/><rect x="12.80" y="6.00" width="1.1" height="1.1" fill="#9aa6d0"/><rect x="12.80" y="8.30" width="1.1" height="1.1" fill="#9aa6d0"/><rect x="0.5" y="0.5" width="27" height="20" fill="none" stroke="#4a2030" stroke-opacity="0.75" stroke-width="1"/></svg>
<span class="t" style="left:1091.18px;top:1012.30px;font-size:28px;color:#154a9c;letter-spacing:0.552px;">United States</span>
<span class="t" style="right:44.34px;top:1012.30px;font-size:28px;color:#333333;transform:scale(1.08,1.09);transform-origin:100% 23.7px">20</span>
<div class="b" style="left:32px;top:1095px;width:1408px;height:2px;background:#e6e6e6"></div>
<div class="b" style="left:32px;top:1117px;width:28px;height:28px;border:2px solid #c8c8c8;border-radius:6px;box-sizing:border-box"></div>
<svg class="b" style="left:82px;top:1119px" width="24" height="24" viewBox="0 0 24 24"><path d="M12.0 0V24M0 12.0H24" stroke="#a8a8a8" stroke-width="4"/></svg>
<span class="t kw" style="left:127px;top:1118.30px;letter-spacing:0.921px">cacao <span class="hl">coffee</span> scrub</span>
<span class="t" style="right:897.92px;top:1118.30px;font-size:28px;color:#333333;transform:scale(1.08,1.09);transform-origin:100% 23.7px">0</span>
<svg class="b" style="left:512.32px;top:1120.10px" width="9" height="21" viewBox="0 0 9 21"><path d="M6.1 0.2H9V20.7H6.1V3.6L1.5 6.9L0.1 4.8L5.6 0.6Z" fill="#333333"/></svg>
<span class="t" style="right:788.92px;top:1118.30px;font-size:28px;color:#ababab;transform:scale(1.08,1.09);transform-origin:100% 23.7px">0</span>
<span class="t" style="right:706.92px;top:1118.30px;font-size:28px;color:#ababab;transform:scale(1.08,1.09);transform-origin:100% 23.7px">0</span>
<span class="t" style="right:577.92px;top:1118.30px;font-size:28px;color:#333333;transform:scale(1.08,1.09);transform-origin:100% 23.7px">0</span>
<svg class="b" style="left:832.32px;top:1120.10px" width="9" height="21" viewBox="0 0 9 21"><path d="M6.1 0.2H9V20.7H6.1V3.6L1.5 6.9L0.1 4.8L5.6 0.6Z" fill="#333333"/></svg>
<div class="b" style="left:942px;top:1110px;width:75px;height:43px;border:2px solid #c8c8c8;border-radius:6px;box-sizing:border-box"></div>
<svg class="b" style="left:959.60px;top:1120.30px" width="9" height="21" viewBox="0 0 9 21"><path d="M6.1 0.2H9V20.7H6.1V3.6L1.5 6.9L0.1 4.8L5.6 0.6Z" fill="#333333"/></svg>
<svg class="b" style="left:982.30px;top:1125.60px" width="17.60" height="11.80" viewBox="-3 -3 17.60 11.80"><polyline points="0,0 5.80,5.80 11.60,0" fill="none" stroke="#333333" stroke-width="2.1" stroke-linecap="butt" stroke-linejoin="miter"/></svg>
<svg class="b" style="left:1049px;top:1117px" width="28" height="21" viewBox="0 0 28 21"><rect width="28" height="21" fill="#f6f0f0"/><rect x="0" y="0.000" width="28" height="1.615" fill="#c0505e"/><rect x="0" y="3.231" width="28" height="1.615" fill="#c0505e"/><rect x="0" y="6.462" width="28" height="1.615" fill="#c0505e"/><rect x="0" y="9.692" width="28" height="1.615" fill="#c0505e"/><rect x="0" y="12.923" width="28" height="1.615" fill="#c0505e"/><rect x="0" y="16.154" width="28" height="1.615" fill="#c0505e"/><rect x="0" y="19.385" width="28" height="1.615" fill="#c0505e"/><rect x="0" y="0" width="15.6" height="10.8" fill="#232b66"/><rect x="1.60" y="1.40" width="1.1" height="1.1" fill="#9aa6d0"/><rect x="1.60" y="3.70" width="1.1" height="1.1" fill="#9aa6d0"/><rect x="1.60" y="6.00" width="1.1" height="1.1" fill="#9aa6d0"/><rect x="1.60" y="8.30" width="1.1" height="1.1" fill="#9aa6d0"/><rect x="4.40" y="1.40" width="1.1" height="1.1" fill="#9aa6d0"/><rect x="4.40" y="3.70" width="1.1" height="1.1" fill="#9aa6d0"/><rect x="4.40" y="6.00" width="1.1" height="1.1" fill="#9aa6d0"/><rect x="4.40" y="8.30" width="1.1" height="1.1" fill="#9aa6d0"/><rect x="7.20" y="1.40" width="1.1" height="1.1" fill="#9aa6d0"/><rect x="7.20" y="3.70" width="1.1" height="1.1" fill="#9aa6d0"/><rect x="7.20" y="6.00" width="1.1" height="1.1" fill="#9aa6d0"/><rect x="7.20" y="8.30" width="1.1" height="1.1" fill="#9aa6d0"/><rect x="10.00" y="1.40" width="1.1" height="1.1" fill="#9aa6d0"/><rect x="10.00" y="3.70" width="1.1" height="1.1" fill="#9aa6d0"/><rect x="10.00" y="6.00" width="1.1" height="1.1" fill="#9aa6d0"/><rect x="10.00" y="8.30" width="1.1" height="1.1" fill="#9aa6d0"/><rect x="12.80" y="1.40" width="1.1" height="1.1" fill="#9aa6d0"/><rect x="12.80" y="3.70" width="1.1" height="1.1" fill="#9aa6d0"/><rect x="12.80" y="6.00" width="1.1" height="1.1" fill="#9aa6d0"/><rect x="12.80" y="8.30" width="1.1" height="1.1" fill="#9aa6d0"/><rect x="0.5" y="0.5" width="27" height="20" fill="none" stroke="#4a2030" stroke-opacity="0.75" stroke-width="1"/></svg>
<span class="t" style="left:1091.18px;top:1118.30px;font-size:28px;color:#154a9c;letter-spacing:0.552px;">United States</span>
<span class="t" style="right:44.92px;top:1118.30px;font-size:28px;color:#333333;transform:scale(1.08,1.09);transform-origin:100% 23.7px">0</span>
<svg class="b" style="left:1365.32px;top:1120.10px" width="9" height="21" viewBox="0 0 9 21"><path d="M6.1 0.2H9V20.7H6.1V3.6L1.5 6.9L0.1 4.8L5.6 0.6Z" fill="#333333"/></svg>
<div class="b" style="left:32px;top:1165px;width:1408px;height:2px;background:#e6e6e6"></div>
<div class="b" style="left:32px;top:1187px;width:28px;height:28px;border:2px solid #c8c8c8;border-radius:6px;box-sizing:border-box"></div>
<svg class="b" style="left:78px;top:1187px" width="32" height="28" viewBox="0 0 32 28"><path d="M3.8 15.8L10.6 22.6L27.6 6.8" fill="none" stroke="#a8a8a8" stroke-width="4"/></svg>
<span class="t kw" style="left:127px;top:1188.30px;letter-spacing:1.017px">cold brew <span class="hl">coffee</span></span>
<span class="t kw" style="left:127px;top:1224.30px;letter-spacing:1.400px">filter</span>
<span class="t" style="right:897.77px;top:1188.30px;font-size:28px;color:#333333;transform:scale(1.08,1.09);transform-origin:100% 23.7px">200</span>
<span class="t" style="right:788.92px;top:1188.30px;font-size:28px;color:#ababab;transform:scale(1.08,1.09);transform-origin:100% 23.7px">0</span>
<span class="t" style="right:706.92px;top:1188.30px;font-size:28px;color:#ababab;transform:scale(1.08,1.09);transform-origin:100% 23.7px">0</span>
<span class="t" style="right:577.34px;top:1188.30px;font-size:28px;color:#333333;transform:scale(1.08,1.09);transform-origin:100% 23.7px">23</span>
<div class="b" style="left:942px;top:1180px;width:75px;height:43px;border:2px solid #c8c8c8;border-radius:6px;box-sizing:border-box"></div>
<svg class="b" style="left:959.60px;top:1190.30px" width="9" height="21" viewBox="0 0 9 21"><path d="M6.1 0.2H9V20.7H6.1V3.6L1.5 6.9L0.1 4.8L5.6 0.6Z" fill="#333333"/></svg>
<svg class="b" style="left:982.30px;top:1195.60px" width="17.60" height="11.80" viewBox="-3 -3 17.60 11.80"><polyline points="0,0 5.80,5.80 11.60,0" fill="none" stroke="#333333" stroke-width="2.1" stroke-linecap="butt" stroke-linejoin="miter"/></svg>
<svg class="b" style="left:1049px;top:1187px" width="28" height="21" viewBox="0 0 28 21"><rect width="28" height="21" fill="#f6f0f0"/><rect x="0" y="0.000" width="28" height="1.615" fill="#c0505e"/><rect x="0" y="3.231" width="28" height="1.615" fill="#c0505e"/><rect x="0" y="6.462" width="28" height="1.615" fill="#c0505e"/><rect x="0" y="9.692" width="28" height="1.615" fill="#c0505e"/><rect x="0" y="12.923" width="28" height="1.615" fill="#c0505e"/><rect x="0" y="16.154" width="28" height="1.615" fill="#c0505e"/><rect x="0" y="19.385" width="28" height="1.615" fill="#c0505e"/><rect x="0" y="0" width="15.6" height="10.8" fill="#232b66"/><rect x="1.60" y="1.40" width="1.1" height="1.1" fill="#9aa6d0"/><rect x="1.60" y="3.70" width="1.1" height="1.1" fill="#9aa6d0"/><rect x="1.60" y="6.00" width="1.1" height="1.1" fill="#9aa6d0"/><rect x="1.60" y="8.30" width="1.1" height="1.1" fill="#9aa6d0"/><rect x="4.40" y="1.40" width="1.1" height="1.1" fill="#9aa6d0"/><rect x="4.40" y="3.70" width="1.1" height="1.1" fill="#9aa6d0"/><rect x="4.40" y="6.00" width="1.1" height="1.1" fill="#9aa6d0"/><rect x="4.40" y="8.30" width="1.1" height="1.1" fill="#9aa6d0"/><rect x="7.20" y="1.40" width="1.1" height="1.1" fill="#9aa6d0"/><rect x="7.20" y="3.70" width="1.1" height="1.1" fill="#9aa6d0"/><rect x="7.20" y="6.00" width="1.1" height="1.1" fill="#9aa6d0"/><rect x="7.20" y="8.30" width="1.1" height="1.1" fill="#9aa6d0"/><rect x="10.00" y="1.40" width="1.1" height="1.1" fill="#9aa6d0"/><rect x="10.00" y="3.70" width="1.1" height="1.1" fill="#9aa6d0"/><rect x="10.00" y="6.00" width="1.1" height="1.1" fill="#9aa6d0"/><rect x="10.00" y="8.30" width="1.1" height="1.1" fill="#9aa6d0"/><rect x="12.80" y="1.40" width="1.1" height="1.1" fill="#9aa6d0"/><rect x="12.80" y="3.70" width="1.1" height="1.1" fill="#9aa6d0"/><rect x="12.80" y="6.00" width="1.1" height="1.1" fill="#9aa6d0"/><rect x="12.80" y="8.30" width="1.1" height="1.1" fill="#9aa6d0"/><rect x="0.5" y="0.5" width="27" height="20" fill="none" stroke="#4a2030" stroke-opacity="0.75" stroke-width="1"/></svg>
<span class="t" style="left:1091.18px;top:1188.30px;font-size:28px;color:#154a9c;letter-spacing:0.552px;">United States</span>
<span class="t" style="right:44.77px;top:1188.30px;font-size:28px;color:#333333;transform:scale(1.08,1.09);transform-origin:100% 23.7px">200</span>
<div class="b" style="left:32px;top:1271px;width:1408px;height:2px;background:#e6e6e6"></div>
<div class="b" style="left:32px;top:1293px;width:28px;height:28px;border:2px solid #c8c8c8;border-radius:6px;box-sizing:border-box"></div>
<svg class="b" style="left:78px;top:1293px" width="32" height="28" viewBox="0 0 32 28"><path d="M3.8 15.8L10.6 22.6L27.6 6.8" fill="none" stroke="#a8a8a8" stroke-width="4"/></svg>
<span class="t kw" style="left:127px;top:1294.30px;letter-spacing:0.704px">make cold brew</span>
<span class="t kw" style="left:127px;top:1330.30px;letter-spacing:1.350px"><span class="hl">coffee</span></span>
<span class="t" style="right:897.77px;top:1294.30px;font-size:28px;color:#333333;transform:scale(1.08,1.09);transform-origin:100% 23.7px">450</span>
<span class="t" style="right:788.92px;top:1294.30px;font-size:28px;color:#ababab;transform:scale(1.08,1.09);transform-origin:100% 23.7px">0</span>
<span class="t" style="right:706.92px;top:1294.30px;font-size:28px;color:#ababab;transform:scale(1.08,1.09);transform-origin:100% 23.7px">0</span>
<span class="t" style="right:577.34px;top:1294.30px;font-size:28px;color:#333333;transform:scale(1.08,1.09);transform-origin:100% 23.7px">30</span>
<div class="b" style="left:942px;top:1286px;width:75px;height:43px;border:2px solid #c8c8c8;border-radius:6px;box-sizing:border-box"></div>
<svg class="b" style="left:959.60px;top:1296.30px" width="9" height="21" viewBox="0 0 9 21"><path d="M6.1 0.2H9V20.7H6.1V3.6L1.5 6.9L0.1 4.8L5.6 0.6Z" fill="#333333"/></svg>
<svg class="b" style="left:982.30px;top:1301.60px" width="17.60" height="11.80" viewBox="-3 -3 17.60 11.80"><polyline points="0,0 5.80,5.80 11.60,0" fill="none" stroke="#333333" stroke-width="2.1" stroke-linecap="butt" stroke-linejoin="miter"/></svg>
<svg class="b" style="left:1049px;top:1293px" width="28" height="21" viewBox="0 0 28 21"><rect width="28" height="21" fill="#f6f0f0"/><rect x="0" y="0.000" width="28" height="1.615" fill="#c0505e"/><rect x="0" y="3.231" width="28" height="1.615" fill="#c0505e"/><rect x="0" y="6.462" width="28" height="1.615" fill="#c0505e"/><rect x="0" y="9.692" width="28" height="1.615" fill="#c0505e"/><rect x="0" y="12.923" width="28" height="1.615" fill="#c0505e"/><rect x="0" y="16.154" width="28" height="1.615" fill="#c0505e"/><rect x="0" y="19.385" width="28" height="1.615" fill="#c0505e"/><rect x="0" y="0" width="15.6" height="10.8" fill="#232b66"/><rect x="1.60" y="1.40" width="1.1" height="1.1" fill="#9aa6d0"/><rect x="1.60" y="3.70" width="1.1" height="1.1" fill="#9aa6d0"/><rect x="1.60" y="6.00" width="1.1" height="1.1" fill="#9aa6d0"/><rect x="1.60" y="8.30" width="1.1" height="1.1" fill="#9aa6d0"/><rect x="4.40" y="1.40" width="1.1" height="1.1" fill="#9aa6d0"/><rect x="4.40" y="3.70" width="1.1" height="1.1" fill="#9aa6d0"/><rect x="4.40" y="6.00" width="1.1" height="1.1" fill="#9aa6d0"/><rect x="4.40" y="8.30" width="1.1" height="1.1" fill="#9aa6d0"/><rect x="7.20" y="1.40" width="1.1" height="1.1" fill="#9aa6d0"/><rect x="7.20" y="3.70" width="1.1" height="1.1" fill="#9aa6d0"/><rect x="7.20" y="6.00" width="1.1" height="1.1" fill="#9aa6d0"/><rect x="7.20" y="8.30" width="1.1" height="1.1" fill="#9aa6d0"/><rect x="10.00" y="1.40" width="1.1" height="1.1" fill="#9aa6d0"/><rect x="10.00" y="3.70" width="1.1" height="1.1" fill="#9aa6d0"/><rect x="10.00" y="6.00" width="1.1" height="1.1" fill="#9aa6d0"/><rect x="10.00" y="8.30" width="1.1" height="1.1" fill="#9aa6d0"/><rect x="12.80" y="1.40" width="1.1" height="1.1" fill="#9aa6d0"/><rect x="12.80" y="3.70" width="1.1" height="1.1" fill="#9aa6d0"/><rect x="12.80" y="6.00" width="1.1" height="1.1" fill="#9aa6d0"/><rect x="12.80" y="8.30" width="1.1" height="1.1" fill="#9aa6d0"/><rect x="0.5" y="0.5" width="27" height="20" fill="none" stroke="#4a2030" stroke-opacity="0.75" stroke-width="1"/></svg>
<span class="t" style="left:1091.18px;top:1294.30px;font-size:28px;color:#154a9c;letter-spacing:0.552px;">United States</span>
<span class="t" style="right:44.77px;top:1294.30px;font-size:28px;color:#333333;transform:scale(1.08,1.09);transform-origin:100% 23.7px">450</span>
<div class="b" style="left:32px;top:1377px;width:1408px;height:2px;background:#e6e6e6"></div>
</body></html>
